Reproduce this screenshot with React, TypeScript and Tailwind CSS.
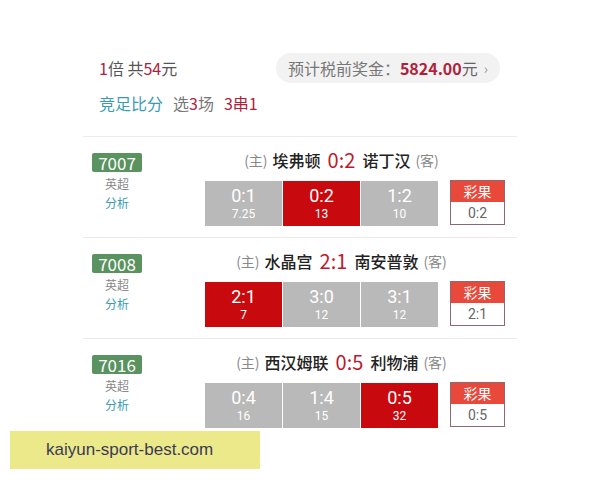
import React from 'react';

type Cell = { score: string; odds: string; hit?: boolean };
type Match = {
  code: string;
  home: string;
  away: string;
  result: string;
  cells: Cell[];
};

const matches: Match[] = [
  {
    code: '7007',
    home: '埃弗顿',
    away: '诺丁汉',
    result: '0:2',
    cells: [
      { score: '0:1', odds: '7.25' },
      { score: '0:2', odds: '13', hit: true },
      { score: '1:2', odds: '10' },
    ],
  },
  {
    code: '7008',
    home: '水晶宫',
    away: '南安普敦',
    result: '2:1',
    cells: [
      { score: '2:1', odds: '7', hit: true },
      { score: '3:0', odds: '12' },
      { score: '3:1', odds: '12' },
    ],
  },
  {
    code: '7016',
    home: '西汉姆联',
    away: '利物浦',
    result: '0:5',
    cells: [
      { score: '0:4', odds: '16' },
      { score: '1:4', odds: '15' },
      { score: '0:5', odds: '32', hit: true },
    ],
  },
];

const font = "font-['Noto_Sans_CJK_SC','Noto_Sans',sans-serif]";

const MatchRow: React.FC<{ m: Match }> = ({ m }) => (
  <div className="flex border-t border-[#ececec] pt-[16px] pb-[11px]">
    {/* 左侧 编号 */}
    <div className="w-[68px] flex flex-col items-center">
      <div className="w-[50px] h-[19px] bg-[#5a9260] rounded-[2px] text-white text-[17px] leading-[19px] text-center">
        {m.code}
      </div>
      <div className="mt-[5px] text-[12px] leading-[14px] text-[#888]">英超</div>
      <div className="mt-[5px] text-[12px] leading-[14px] text-[#3a9bb3]">分析</div>
    </div>
    {/* 右侧 */}
    <div className="ml-[54px] flex flex-col">
      <div className="w-[273px] h-[24px] flex items-center justify-center gap-[5px] -mt-[5px]">
        <span className="text-[14px] text-[#888]">(主)</span>
        <span className="text-[16px] font-medium text-[#222]">{m.home}</span>
        <span className="text-[20px] text-[#c0182a] mx-[2px]">{m.result}</span>
        <span className="text-[16px] font-medium text-[#222]">{m.away}</span>
        <span className="text-[14px] text-[#888]">(客)</span>
      </div>
      <div className="flex mt-[9px] items-start">
        <div className="flex gap-px">
          {m.cells.map((c) => (
            <div
              key={c.score}
              className={
                "w-[77px] h-[45px] flex flex-col items-center justify-center gap-[1px] text-white font-['Roboto',sans-serif] " +
                (c.hit ? 'bg-[#c80a0e]' : 'bg-[#b9b9b9]')
              }
            >
              <div className="text-[18px] leading-[20px]">{c.score}</div>
              <div className="text-[12px] leading-[14px]">{c.odds}</div>
            </div>
          ))}
        </div>
        <div className="ml-[12px] -mt-px w-[55px] h-[45px] border border-[#8a6a70] flex flex-col">
          <div className="h-[21px] bg-[#e8493b] text-white text-[14px] leading-[21px] text-center">彩果</div>
          <div className="flex-1 bg-white text-[14px] text-[#666] flex items-center justify-center font-['Roboto',sans-serif]">
            {m.result}
          </div>
        </div>
      </div>
    </div>
  </div>
);

export default function App() {
  return (
    <div className={`relative w-[600px] h-[480px] bg-white overflow-hidden ${font}`}>
      <div className="ml-[83px] w-[434px] pt-[53px]">
        {/* 头部 */}
        <div className="pl-[16px] pr-[17px] pb-[23px]">
          <div className="flex items-center justify-between h-[30px]">
            <div className="text-[16px] text-[#555]">
              <span className="text-[#b0203a]">1</span>倍 共<span className="text-[#b0203a]">54</span>元
            </div>
            <div className="h-[30px] px-[12px] rounded-full bg-[#f2f2f2] flex items-center text-[16px] text-[#777]">
              预计税前奖金：
              <span className="text-[#b0203a] font-semibold">5824.00</span>
              <span className="text-[#666]">元</span>
              <span className="ml-[6px] text-[#999] text-[14px]">›</span>
            </div>
          </div>
          <div className="mt-[10px] h-[20px] flex items-center text-[16px]">
            <span className="text-[#3a9bb3]">竞足比分</span>
            <span className="ml-[10px] text-[#777]">
              选<span className="text-[#b0203a]">3</span>场
            </span>
            <span className="ml-[10px] text-[#b0203a]">3串1</span>
          </div>
        </div>
        {matches.map((m) => (
          <MatchRow key={m.code} m={m} />
        ))}
      </div>

      {/* 底部水印条 */}
      <div className="absolute left-[10px] top-[431px] w-[250px] h-[38px] bg-[#ece98a] flex items-center pl-[36px]">
        <span className="font-['Liberation_Sans',sans-serif] text-[17px] text-[#3b3b55]">kaiyun-sport-best.com</span>
      </div>
    </div>
  );
}
